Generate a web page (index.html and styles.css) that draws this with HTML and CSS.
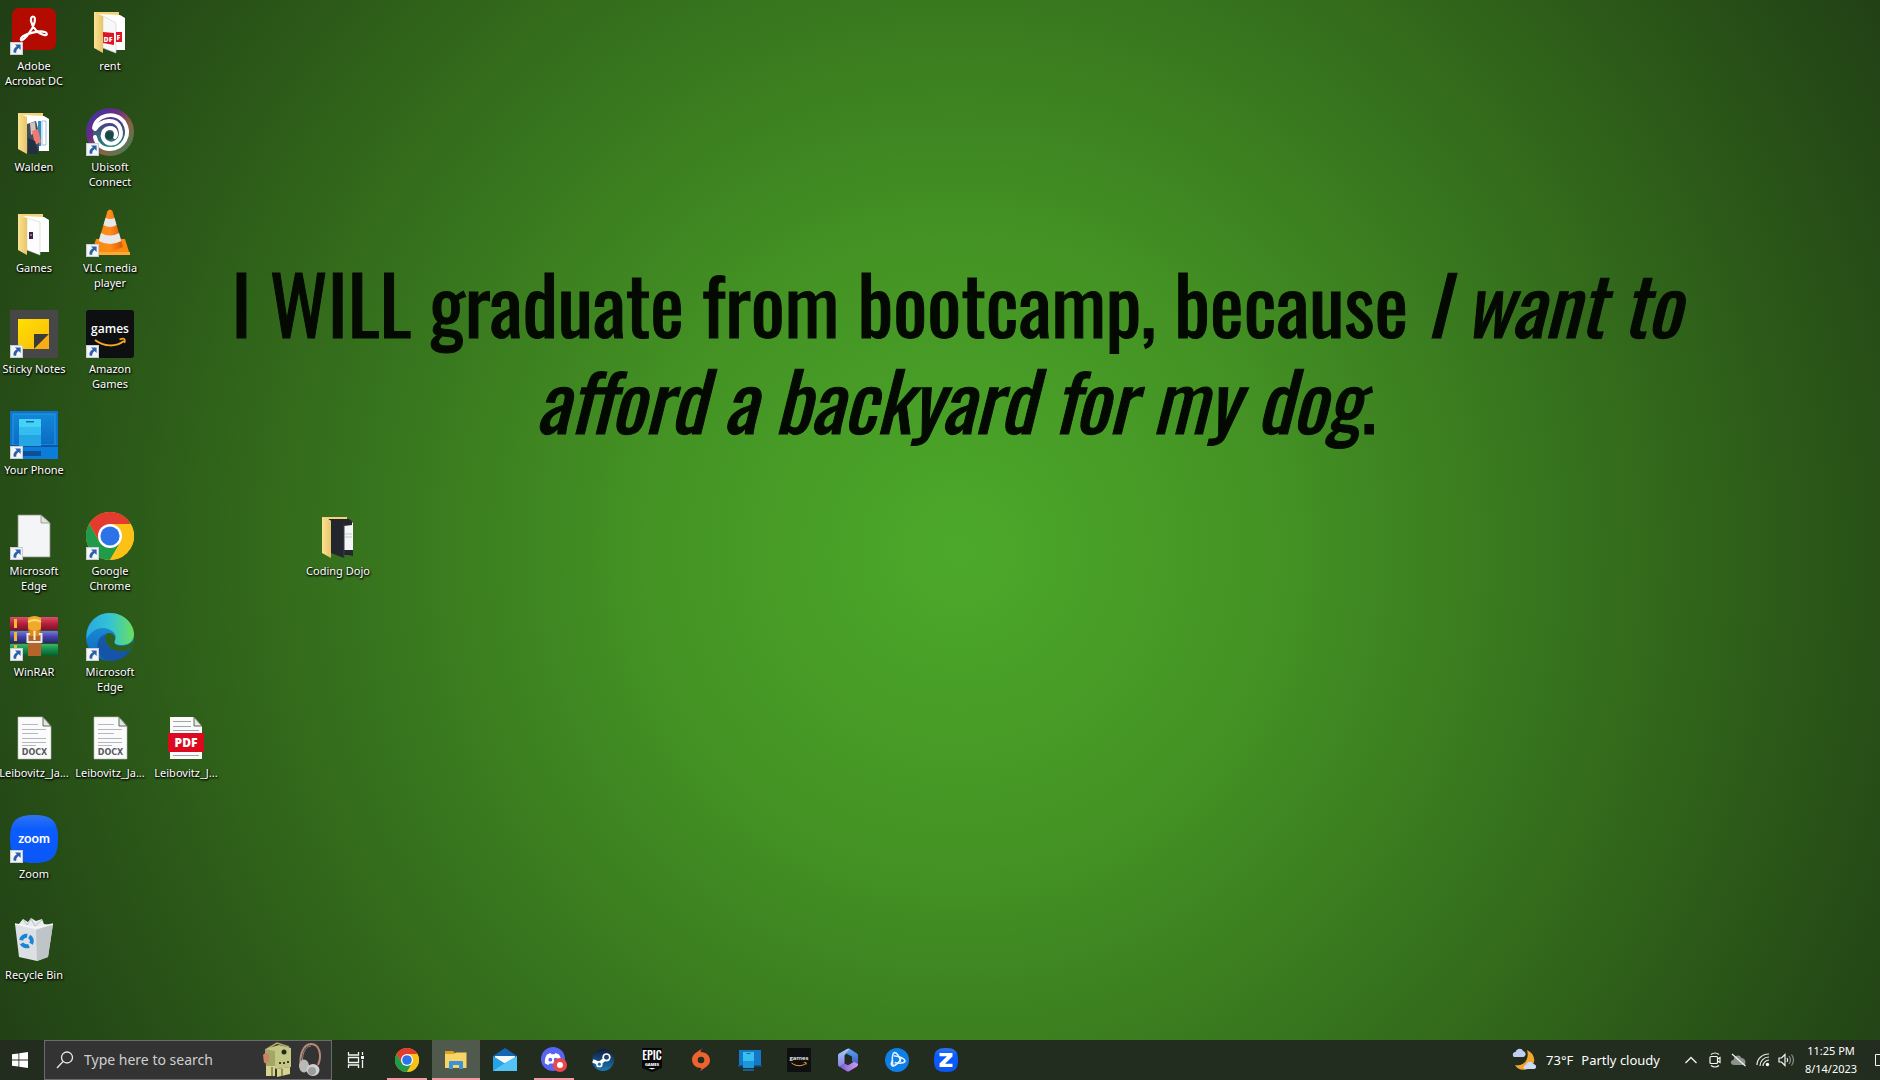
FILE: index.html
```html
<!DOCTYPE html>
<html lang="en">
<head>
<meta charset="utf-8">
<title>Desktop</title>
<link rel="stylesheet" href="styles.css">
</head>
<body>
<svg class="sprite" aria-hidden="true">
  <defs>
    <linearGradient id="g-flap" x1="0" x2="1"><stop offset="0" stop-color="#fbe293"/><stop offset="1" stop-color="#e8c566"/></linearGradient>
    <linearGradient id="g-rainbow" x1="0" y1="0" x2="1" y2="1"><stop offset="0" stop-color="#2f3aa8"/><stop offset=".35" stop-color="#6a2a86"/><stop offset=".62" stop-color="#8a6044"/><stop offset="1" stop-color="#2f8a5a"/></linearGradient>
    <linearGradient id="g-ubi" x1="0" y1="0" x2="0" y2="1"><stop offset="0" stop-color="#5a2a88"/><stop offset="1" stop-color="#1f8a78"/></linearGradient>
    <linearGradient id="g-cone" x1="0" x2="1"><stop offset="0" stop-color="#f98a12"/><stop offset=".5" stop-color="#ff8c1a"/><stop offset="1" stop-color="#d85a00"/></linearGradient>
    <linearGradient id="g-note" x1="0" y1="0" x2="1" y2="1"><stop offset="0" stop-color="#ffe000"/><stop offset="1" stop-color="#fbb90c"/></linearGradient>
    <linearGradient id="g-phone" x1="0" y1="0" x2="0" y2="1"><stop offset="0" stop-color="#1287d8"/><stop offset="1" stop-color="#0a6cc4"/></linearGradient>
    <linearGradient id="g-edge-top" x1="0" x2="1"><stop offset="0" stop-color="#2aa9e0"/><stop offset=".5" stop-color="#35c3d4"/><stop offset="1" stop-color="#6be05a"/></linearGradient>
    <linearGradient id="g-edge-left" x1="0" y1="0" x2="0" y2="1"><stop offset="0" stop-color="#1f9be0"/><stop offset="1" stop-color="#0c63b8"/></linearGradient>
    <linearGradient id="g-zoom" x1="0" y1="0" x2="0" y2="1"><stop offset="0" stop-color="#2f74ef"/><stop offset=".3" stop-color="#0b5cff"/><stop offset="1" stop-color="#0b56f5"/></linearGradient>
    <linearGradient id="g-red" x1="0" y1="0" x2="0" y2="1"><stop offset="0" stop-color="#d9506a"/><stop offset=".5" stop-color="#b8203c"/><stop offset="1" stop-color="#7c1228"/></linearGradient>
    <linearGradient id="g-blue" x1="0" y1="0" x2="0" y2="1"><stop offset="0" stop-color="#7a78d8"/><stop offset=".5" stop-color="#4340a8"/><stop offset="1" stop-color="#29266e"/></linearGradient>
    <linearGradient id="g-green" x1="0" y1="0" x2="0" y2="1"><stop offset="0" stop-color="#3cb56c"/><stop offset=".5" stop-color="#148a44"/><stop offset="1" stop-color="#0a5a2a"/></linearGradient>
    <linearGradient id="g-steam" x1="0" y1="0" x2="0" y2="1"><stop offset="0" stop-color="#101b3a"/><stop offset="1" stop-color="#1b7ab8"/></linearGradient>
    <linearGradient id="g-365a" x1="0" y1="0" x2="1" y2="0"><stop offset="0" stop-color="#7a5fd8"/><stop offset="1" stop-color="#d49af0"/></linearGradient>
    <linearGradient id="g-365b" x1="0" y1="0" x2="0" y2="1"><stop offset="0" stop-color="#58a6ee"/><stop offset="1" stop-color="#3f56c8"/></linearGradient>
    <linearGradient id="g-365c" x1="0" y1="0" x2="0" y2="1"><stop offset="0" stop-color="#9fd0f8"/><stop offset="1" stop-color="#8a7ee6"/></linearGradient>

    <symbol id="shortcut" viewBox="0 0 12 12">
      <rect x=".5" y=".5" width="11" height="11" fill="#f4f6f8" stroke="#c9ced4"/>
      <path d="M4.600 2.200H9.800V7.400L8 5.600C6.400 6.800 5.600 8 5.800 10H3.400C2.600 7.400 4 5.200 6.300 3.900Z" fill="#2b5fa8"/>
    </symbol>
    <symbol id="folder" viewBox="0 0 48 48">
      <path d="M8 5H33V40H10Z" fill="#f3d27c"/>
      <path d="M12 7 34 8 39 11V43H29L17 38Z" fill="#fff"/>
    </symbol>
    <symbol id="flap" viewBox="0 0 48 48">
      <path d="M8 5 17 9V46L8 41Z" fill="url(#g-flap)"/>
    </symbol>
    <symbol id="chrome" viewBox="0 0 48 48">
      <circle cx="24" cy="24" r="24" fill="#fbc116"/>
      <path d="M3.200 12A24 24 0 0 1 44.800 12H24L13.600 30Z" fill="#e33b2e"/>
      <path d="M3.200 12A24 24 0 0 0 24 48L34.400 30 24 34 13.600 30Z" fill="#219a49"/>
      <path d="M44.800 12A24 24 0 0 1 24 48L34.400 30 36 20 24 12Z" fill="#fbc116"/>
      <circle cx="24" cy="24" r="12" fill="#fff"/><circle cx="24" cy="24" r="9.600" fill="#2d73e8"/>
    </symbol>
    <symbol id="docx" viewBox="0 0 48 48">
      <path d="M8 3H33L41 12V45H8Z" fill="#fbfbfb" stroke="#b9beb6" stroke-width=".6"/>
      <path d="M33 3V12H41Z" fill="#e4e6e2" stroke="#5d6b58"/>
      <path d="M12 10.500H28M12 15.500H36M12 19.500H28M12 24.500H36M12 28.500H36M12 31.500H26" stroke="#b4b7bd"/>
      <text x="24.500" y="41" text-anchor="middle" class="art-docx" font-size="8" fill="#565b62">DOCX</text>
    </symbol>
    <symbol id="amazon" viewBox="0 0 48 48">
      <rect width="48" height="48" rx="3" fill="#0e0f10"/>
      <text x="24" y="23" text-anchor="middle" class="art-semi" font-size="12" fill="#fff">games</text>
      <path d="M9 30C18 37 30 37 38 31" fill="none" stroke="#f5a623" stroke-width="2"/>
      <path d="M33.500 29.500C37 28 40 28 38.500 33" fill="none" stroke="#f5a623" stroke-width="1.600"/>
    </symbol>
  </defs>
</svg>

<main class="screen">
  <p class="wallpaper">I WILL graduate from bootcamp, because <em>I want to<br>afford a backyard for my dog</em>.</p>

  <div class="desktop">
    <button class="item r1 c1"><span class="icon">
      <svg viewBox="0 0 48 48"><rect x="2" y="1" width="44" height="42" rx="7" fill="#b30b00"/><path d="M23 9.500C27 9.500 24.500 20 18 27.500 13 34 10 34.500 11 31.500 12.500 28 22 25 30 24.300 38 24 38.500 29 34 28 28 27 22 20 21 14 20.700 11 21.500 9.500 23 9.500Z" fill="none" stroke="#fff" stroke-width="2.200"/></svg>
      <svg class="arrow"><use href="#shortcut"/></svg></span><span class="label">Adobe Acrobat DC</span></button>
    <button class="item r1 c2"><span class="icon">
      <svg viewBox="0 0 48 48"><use href="#folder"/><path d="M17 9 30 16V46L17 41Z" fill="#f8f8f8" stroke="#c9ccd2" stroke-width=".6"/><path d="M17 25 28 26V38L17 36ZM30 25H36V35H30Z" fill="#dc1424"/><text x="17.500" y="34.500" class="art-bold" font-size="7" fill="#fff">DF</text><text x="30.500" y="33" class="art-bold" font-size="7" fill="#fff">F</text><use href="#flap"/></svg>
      </span><span class="label">rent</span></button>

    <button class="item r2 c1"><span class="icon">
      <svg viewBox="0 0 48 48"><use href="#folder"/><path d="M28 13H31V38H28Z" fill="#2f8fc4"/><path d="M32 13H36V37H32Z" fill="none" stroke="#9fc3de"/><path d="M17 16 26 13 29 25V46L17 43Z" fill="#3b4c60"/><path d="M20 15 25 14 26 24 21 27Z" fill="#d8c4b4"/><path d="M22 23 28 21 31 34 25 37Z" fill="#ee7a70"/><path d="M18 30 25 33 29 46H18Z" fill="#23303f"/><use href="#flap"/></svg>
      </span><span class="label">Walden</span></button>
    <button class="item r2 c2"><span class="icon">
      <svg viewBox="0 0 48 48"><circle cx="24" cy="24" r="24" fill="url(#g-rainbow)"/><circle cx="24" cy="24" r="17" fill="url(#g-ubi)"/><path d="M8 20C10 7 29 2 38 14 46 27 37 41 24 41 15 41 10 35 9 29M9 21C16 11 30 10 34 20 38 32 27 39 20 34 14 29 17 20 24 20 30 20 31 26 29 29" fill="none" stroke="#fff" stroke-width="4" stroke-linecap="round"/><circle cx="23.500" cy="27.500" r="4" fill="#1d4744"/></svg>
      <svg class="arrow"><use href="#shortcut"/></svg></span><span class="label">Ubisoft Connect</span></button>

    <button class="item r3 c1"><span class="icon">
      <svg viewBox="0 0 48 48"><use href="#folder"/><path d="M17 9 30 13V46L17 41Z" fill="#fdfdfd" stroke="#d2d2d2" stroke-width=".6"/><rect x="19" y="23" width="4" height="7" fill="#2a2856"/><rect x="20" y="25" width="2" height="2" fill="#d2564e"/><use href="#flap"/></svg>
      </span><span class="label">Games</span></button>
    <button class="item r3 c2"><span class="icon">
      <svg viewBox="0 0 48 48"><path d="M10 30H39L44 46H5Z" fill="#f98a12"/><path d="M5 43H44V46H5Z" fill="#ffa930"/><path d="M21.500 2Q24 -1 26.500 2L37 38Q24 45 11 38Z" fill="url(#g-cone)"/><path d="M19.500 9Q24 11 28.500 9L30.500 16Q24 20 17.500 16ZM15 24Q24 29 33 24L35.300 32Q24 38 12.700 32Z" fill="#e6e8ec"/></svg>
      <svg class="arrow"><use href="#shortcut"/></svg></span><span class="label">VLC media player</span></button>

    <button class="item r4 c1"><span class="icon">
      <svg viewBox="0 0 48 48"><rect width="48" height="48" fill="#474747"/><path d="M8 9H39V24L24 39H8Z" fill="url(#g-note)"/><path d="M24 24H39L24 39Z" fill="#3a3a3a"/><path d="M39 24V39H24Z" fill="#f9ad14"/></svg>
      <svg class="arrow"><use href="#shortcut"/></svg></span><span class="label">Sticky Notes</span></button>
    <button class="item r4 c2"><span class="icon">
      <svg viewBox="0 0 48 48"><use href="#amazon"/></svg>
      <svg class="arrow"><use href="#shortcut"/></svg></span><span class="label">Amazon Games</span></button>

    <button class="item r5 c1"><span class="icon">
      <svg viewBox="0 0 48 48"><rect width="48" height="48" fill="#0c74cc"/><rect x="3" y="3" width="42" height="31" fill="url(#g-phone)" stroke="#2a98e2"/><rect y="34" width="48" height="2" fill="#0a56a4"/><rect y="36" width="48" height="12" fill="#0b7cd8"/><rect x="9" y="8" width="22" height="27" rx="1" fill="#33bdf0"/><path d="M9 9Q9 8 10 8H30Q31 8 31 9V16H9Z" fill="#46d2f6"/><rect x="9" y="24" width="22" height="11" fill="#25a5e4"/><rect x="16" y="10" width="8" height="1.500" fill="#1668a8"/><path d="M9 40H31V45H9Z" fill="#0a5098"/></svg>
      <svg class="arrow"><use href="#shortcut"/></svg></span><span class="label">Your Phone</span></button>

    <button class="item r6 c1"><span class="icon">
      <svg viewBox="0 0 48 48"><path d="M8 3H31L40 11V45H8Z" fill="#f3f5f7" stroke="#8a9186" stroke-width=".8"/><path d="M31 3V11H40Z" fill="#dfe3e0" stroke="#8a9186" stroke-width=".8"/></svg>
      <svg class="arrow"><use href="#shortcut"/></svg></span><span class="label">Microsoft Edge</span></button>
    <button class="item r6 c2"><span class="icon">
      <svg viewBox="0 0 48 48"><use href="#chrome"/></svg>
      <svg class="arrow"><use href="#shortcut"/></svg></span><span class="label">Google Chrome</span></button>
    <button class="item r6 c5"><span class="icon">
      <svg viewBox="0 0 48 48"><use href="#folder"/><path d="M14 7H35L38 9V14L30 15V40H39V44L30 42V46L17 41V9Z" fill="#24262e"/><path d="M30 14 38 13V38L30 39Z" fill="#f4f5f7"/><path d="M31 22H38M31 25H38" stroke="#c2c6cc"/><path d="M30 38H39V43H30Z" fill="#24262e"/><path d="M30 12V46" stroke="#3b3e48"/><use href="#flap"/></svg>
      </span><span class="label">Coding Dojo</span></button>

    <button class="item r7 c1"><span class="icon">
      <svg viewBox="0 0 48 48"><rect y="4" width="48" height="13" rx="1" fill="url(#g-red)"/><rect y="18" width="48" height="12" rx="1" fill="url(#g-blue)"/><rect y="31" width="48" height="12" rx="1" fill="url(#g-green)"/><path d="M4 6H7V15H4ZM4 19H7V28H4ZM4 32H7V41H4Z" fill="#f7b733"/><rect x="18" y="12" width="13" height="31" fill="#b5652a"/><path d="M18 5Q24.500 1 31 5V14Q31 18 24.500 18T18 14Z" fill="#f0a92a"/><path d="M18 9Q24.500 5 31 9" fill="none" stroke="#fbdc72" stroke-width="2"/><rect x="19" y="18" width="11" height="5" fill="#e08a20"/><path d="M20 21H17.500V29H31.500V21H29" fill="none" stroke="#e6e8ec" stroke-width="2"/><rect x="23.500" y="18" width="2" height="9" fill="#fff2c8"/></svg>
      <svg class="arrow"><use href="#shortcut"/></svg></span><span class="label">WinRAR</span></button>
    <button class="item r7 c2"><span class="icon">
      <svg viewBox="0 0 48 48"><circle cx="24" cy="24" r="24" fill="url(#g-edge-left)"/><path d="M1 18C5 5 14 0 24 0 38 0 48 11 48 21 48 29 42 32 36 32 30 32 27 30 29 27 31 24 29 18 22 16 13 13 5 18 .500 26Z" fill="url(#g-edge-top)"/><path d="M20 21C13 25 14 37 23 42 30 46 38 43 45 36 40 45 31 49 22 48 9 44 8 24 20 21Z" fill="#1554a6"/><path d="M20 21C25 18 30 22 29 27 27 30 29 33 36 33 41 33 45 30 47 28L48 32C47 35 46 36 45 35 41 39 36 39 32 38 22 37 17 28 20 21Z" fill="#2c601c"/><path d="M20 21C17 29 22 37 32 38 36 39 41 39 45 35 41 42 35 47 27 47 15 43 12 26 20 21Z" fill="#1554a6"/></svg>
      <svg class="arrow"><use href="#shortcut"/></svg></span><span class="label">Microsoft Edge</span></button>

    <button class="item r8 c1"><span class="icon"><svg viewBox="0 0 48 48"><use href="#docx"/></svg></span><span class="label">Leibovitz_Ja...</span></button>
    <button class="item r8 c2"><span class="icon"><svg viewBox="0 0 48 48"><use href="#docx"/></svg></span><span class="label">Leibovitz_Ja...</span></button>
    <button class="item r8 c3"><span class="icon">
      <svg viewBox="0 0 48 48"><path d="M8 3H32L40 12V45H8Z" fill="#fbfbfb"/><path d="M32 3V12H40Z" fill="#e4e6e2" stroke="#5d6b58"/><path d="M11 7.500H29M11 12.500H29M11 16.500H37M11 41.500H37" stroke="#9fa3aa"/><rect x="6" y="19" width="36" height="19" fill="#dc0a1e"/><text x="24" y="33" text-anchor="middle" class="art-bold" font-size="12" fill="#fff">PDF</text></svg>
      </span><span class="label">Leibovitz_J...</span></button>

    <button class="item r9 c1"><span class="icon">
      <svg viewBox="0 0 48 48"><path d="M24 0C42 0 48 6 48 24S42 48 24 48 0 42 0 24 6 0 24 0Z" fill="url(#g-zoom)"/><text x="24" y="28" text-anchor="middle" class="art-zoom" font-size="13" fill="#fff">zoom</text></svg>
      <svg class="arrow"><use href="#shortcut"/></svg></span><span class="label">Zoom</span></button>
    <button class="item r10 c1"><span class="icon">
      <svg viewBox="0 0 48 48"><path d="M8 9 13 3 18 6 21 2 26 5 32 3 34 8 40 9 32 15H14Z" fill="#e9ebee"/><path d="M13 3 17 9 21 3 25 10 32 4" fill="none" stroke="#b9bdc2"/><path d="M5 8 26 14 43 8 38 41 27 45 9 41Z" fill="#dcdfe3"/><path d="M26 14 43 8 38 41 27 45Z" fill="#bfc4c9"/><path d="M5 8 26 12 43 8" fill="none" stroke="#f5f6f7" stroke-width="1.500"/><circle cx="16.500" cy="25" r="5.300" fill="none" stroke="#1a84d6" stroke-width="4" stroke-dasharray="8.200 2.900" transform="rotate(-60 16.500 25)"/></svg>
      </span><span class="label">Recycle Bin</span></button>
  </div>
</main>

<footer class="taskbar">
  <button class="task start" aria-label="Start"><svg width="16" height="16" viewBox="0 0 16 16" fill="#fff"><path d="M0 2.300 6.500 1.400V7.600H0ZM7.300 1.300 16 0V7.600H7.300ZM0 8.400H6.500V14.600L0 13.700ZM7.300 8.400H16V16L7.300 14.700Z"/></svg></button>
  <label class="search">
    <svg width="18" height="18" viewBox="0 0 18 18" fill="none" stroke="#e8e8e8" stroke-width="1.300"><circle cx="11" cy="6.500" r="5.500"/><path d="M7 10.500 1 17"/></svg>
    <input type="text" placeholder="Type here to search" aria-label="Type here to search">
    <svg width="60" height="36" viewBox="0 0 60 36">
      <path d="M4 7 14 1 26 5" fill="none" stroke="#b5ad62" stroke-width="1.500"/>
      <path d="M2 7 16 3 28 6V25L14 27 3 24Z" fill="#c3c684"/><path d="M2 7 12 9V27L3 24Z" fill="#a3a766"/>
      <path d="M0 13Q3 9 6 13V20L1 21Z" fill="#c98465"/>
      <circle cx="21" cy="10" r="2.500" fill="#252b1c"/>
      <path d="M16 20H18V22H16ZM20 20H22V22H20ZM24 19H26V21H24Z" fill="#3a3f28"/>
      <path d="M3 24H12V34H3ZM14 27 27 25V32L14 35Z" fill="#d7d391"/><path d="M8 25H10V34H8ZM18 27H20V34H18Z" fill="#8f9152"/>
      <path d="M38 24C36 14 40 2 48 2 57 2 59 14 55 23" fill="none" stroke="#b98b78" stroke-width="2"/><path d="M40 22C38 14 42 4 48 4" fill="none" stroke="#8f8a88"/>
      <ellipse cx="41" cy="24" rx="5" ry="6.500" fill="#b9bab8"/><ellipse cx="50" cy="28" rx="6.500" ry="6" fill="#cfd0cf"/><ellipse cx="49" cy="29" rx="4" ry="4" fill="#9b9d9d"/>
    </svg>
  </label>

  <nav class="tasks">
    <button class="task" aria-label="Task View"><svg width="18" height="18" viewBox="0 0 18 18" fill="none" stroke="#f2f2f2" stroke-width="1.300"><path d="M1.500 1V4H11.500V1M1.500 17V14H11.500V17M1.500 6.500H11.500V11.500H1.500ZM15.500 1V4M15.500 9V17"/><path d="M14 5H17V8H14Z" fill="#f2f2f2" stroke="none"/></svg></button>
    <button class="task running first" aria-label="Google Chrome"><svg width="24" height="24"><use href="#chrome"/></svg></button>
    <button class="task active" aria-label="File Explorer"><svg width="24" height="24" viewBox="0 0 24 24"><path d="M1 3H9L11 5H22V9H1Z" fill="#e0a11c"/><path d="M1 6H10L12 4.500H22.500V20H1Z" fill="#fbd467"/><path d="M5 21V14Q5 13 6 13H18Q19 13 19 14V21H15V17H9V21Z" fill="#3a94dc"/></svg></button>
    <button class="task" aria-label="Mail"><svg width="24" height="24" viewBox="0 0 24 24"><path d="M0 8 12 0 24 8V12H0Z" fill="#1266b4"/><path d="M2 8H22V15H2Z" fill="#f2f6fa"/><path d="M0 8 12 15.500 24 8V23H0Z" fill="#2aa3e6"/><path d="M0 23 12 15 24 8V23Z" fill="#53c4f4"/><path d="M3 8H21L12 14Z" fill="#f6f8fb"/></svg></button>
    <button class="task running" aria-label="Discord"><svg width="26" height="26" viewBox="0 0 26 26"><circle cx="12" cy="12" r="12" fill="#5865f2"/><path d="M6 7.500 9.500 6 10.500 7.200H13.500L14.500 6 18 7.500C20 10.500 20.500 13.500 20 16.500L16.500 18 15.500 16.500H8.500L7.500 18 4 16.500C3.500 13.500 4 10.500 6 7.500Z" fill="#fff"/><circle cx="9.300" cy="12.700" r="1.900" fill="#5865f2"/><circle cx="14.700" cy="12.700" r="1.900" fill="#5865f2"/><circle cx="19" cy="18" r="7" fill="#e8484c"/><circle cx="19" cy="18" r="3" fill="#fff"/></svg></button>
    <button class="task" aria-label="Steam"><svg width="22" height="22" viewBox="0 0 24 24"><circle cx="12" cy="12" r="12" fill="url(#g-steam)"/><path d="M1 13 8 16 14 11" fill="none" stroke="#fff" stroke-width="4"/><circle cx="8" cy="16.500" r="3.500" fill="#fff"/><circle cx="8" cy="16.500" r="1.700" fill="#2a6a9c"/><circle cx="15.800" cy="9" r="4.500" fill="#fff"/><circle cx="15.800" cy="9" r="2.700" fill="#22406a"/></svg></button>
    <button class="task" aria-label="Epic Games"><svg width="22" height="24" viewBox="0 0 22 24"><path d="M1 1Q1 0 2 0H20Q21 0 21 1V20L11 24 1 20Z" fill="#060708"/><text x="11" y="12" text-anchor="middle" class="art-narrow" font-size="11" fill="#fff">EPIC</text><text x="11" y="17.500" text-anchor="middle" class="art-bold" font-size="4" fill="#fff">GAMES</text><path d="M7.500 20H14.500L11 21.500Z" fill="#fff"/></svg></button>
    <button class="task" aria-label="Origin"><svg width="20" height="24" viewBox="0 0 20 24"><path d="M12 0C10 1.500 9.500 2.700 9.700 4 15 4 19 7.500 19 12.500 19 18 13 20 8 24 10 22 10.500 21.300 10.300 20 5 20 1 16.500 1 11.500 1 6 7 3.500 12 0Z" fill="#ee6230"/><circle cx="10" cy="12" r="3.300" fill="#232d1f"/></svg></button>
    <button class="task" aria-label="Your Phone"><svg width="24" height="24" viewBox="0 0 24 24"><path d="M1 2H23V17H1Z" fill="#1379c6"/><path d="M0 17H24V18.500H0Z" fill="#0b559c"/><path d="M5 4H16V20H5Z" fill="#35c0f0"/><path d="M5 13H16V20H5Z" fill="#1e96da"/><path d="M8.500 5H12.500V6H8.500Z" fill="#1668a8"/><path d="M5 21H16V23H5Z" fill="#0f5e9e"/></svg></button>
    <button class="task" aria-label="Amazon Games"><svg width="24" height="24"><use href="#amazon"/></svg></button>
    <button class="task" aria-label="Microsoft 365"><svg width="22" height="24" viewBox="0 0 22 24"><path d="M13 1 20 5.500Q21 6.200 21 7.500V17L15 13.500V8.500L9 5.500Z" fill="url(#g-365b)"/><path d="M13 1 9 5.500 7.500 7.500V15.500L3 19 2 18.400Q1 17.800 1 16.500V7.500Q1 6.200 2 5.500L9.500 1.200Q11.500 0 13 1Z" fill="url(#g-365c)"/><path d="M3 19 7.500 15.500 11 17.300 17 13.800 21 16V16.500Q21 17.800 20 18.400L12.500 23Q11 24 9.500 23Z" fill="url(#g-365a)"/></svg></button>
    <button class="task" aria-label="Battle.net"><svg width="24" height="24" viewBox="0 0 24 24"><circle cx="12" cy="12" r="12" fill="#0e7fe6"/><g fill="none" stroke="#e6f4ff" stroke-width="1.500"><path d="M8.500 18.500C6.500 14 7 5.500 9.500 4.500 12 4.500 15 9 15.500 14"/><path d="M9 8C14 7.500 20 11 20 13 19.500 15 14 16 9.500 14.500"/><path d="M16.500 9C15.500 13.500 10 18.500 7.500 18 5 17 6.500 14 8 12"/></g></svg></button>
    <button class="task" aria-label="Zoom"><svg width="24" height="24" viewBox="0 0 24 24"><path d="M12 0C21 0 24 3 24 12S21 24 12 24 0 21 0 12 3 0 12 0Z" fill="url(#g-zoom)"/><path d="M5.500 5H18.500V8.500L11 15.800H18.500V19H5.500V15.500L13 8.200H5.500Z" fill="#fff"/></svg></button>
  </nav>

  <div class="tray">
    <button class="weather"><svg width="26" height="24" viewBox="0 0 26 24"><path d="M15 2C24 6 25 17 16 21 10 23 5 21 3 17 11 19 18 12 15 2Z" fill="#f3a52c"/><path d="M3 9C0 9 0 4 3.500 4 5 0 10 0 11 3 15 4 14 9 11 9Z" fill="#bcd0f2"/><path d="M13 21C11 21 11 17 14 17 15 13 20 13 21 16 25 16 25 21 22 21Z" fill="#cbdcf8"/></svg><span>73°F</span><span>Partly cloudy</span></button>
    <div class="status">
      <button aria-label="Show hidden icons"><svg width="14" height="14" viewBox="0 0 14 14" fill="none" stroke="#f4f4f4" stroke-width="1.300"><path d="M1.500 10 7 4.500 12.500 10"/></svg></button>
      <button aria-label="Meet Now"><svg width="14" height="16" viewBox="0 0 14 16" fill="none" stroke="#f4f4f4" stroke-width="1.200"><path d="M3 2.500Q7-.500 11 2.500M3 13.500Q7 16.500 11 13.500"/><rect x="2" y="4.500" width="7.500" height="7" rx="1"/><path d="M9.500 7 12 5.500V10.500L9.500 9"/></svg></button>
      <button aria-label="OneDrive"><svg width="17" height="14" viewBox="0 0 17 14"><path d="M4 12C0 12 0 7 3.500 7 4 2 10 1 11.500 5 16 5 17 12 13 12Z" fill="#8d918b"/><path d="M2 1 15.500 13" stroke="#f2f2f2" stroke-width="1.300"/></svg></button>
      <button aria-label="Network"><svg width="14" height="14" viewBox="0 0 14 14" fill="none" stroke="#e6e8e4" stroke-width="1.200"><path d="M1 12C1 6 6 1 13 1M4 13C4 8 8 4 13 4M7 13C7 10 10 7 13 7"/><circle cx="11.500" cy="11.500" r="1.700" fill="#fff" stroke="none"/></svg></button>
      <button aria-label="Volume"><svg width="17" height="14" viewBox="0 0 17 14" fill="none" stroke="#f4f4f4" stroke-width="1.200"><path d="M1 5H3.500L7 1.500V12.500L3.500 9H1Z"/><path d="M9 5Q10.500 7 9 9"/><path d="M11 3Q14 7 11 11M13.500 1.500Q17.500 7 13.500 12.500" stroke="#8a9086"/></svg></button>
    </div>
    <button class="clock"><time>11:25 PM</time><time>8/14/2023</time></button>
    <button class="notify" aria-label="Notifications"><svg width="16" height="16" viewBox="0 0 16 16" fill="none" stroke="#f4f4f4"><path d="M.500 2.500H15.500V13.500H.500Z"/></svg></button>
  </div>
</footer>
</body>
</html>
```
FILE: styles.css
```css
* { box-sizing: border-box; }

body {
  margin: 0;
  min-height: 100vh;
  display: flex;
  flex-direction: column;
  overflow: hidden;
  color: #fff;
  font-family: "Noto Sans", "Open Sans", sans-serif;
  font-size: 11px;
  background: radial-gradient(circle at 51% 51%, #4ca92a 0%, #449324 28%, #3a7b1f 48%, #30631a 68%, #274e17 85%, #213f15 99%);
}

button {
  margin: 0;
  padding: 0;
  border: 0;
  background: none;
  color: inherit;
  font: inherit;
}

svg { display: block; flex: none; }

.sprite { position: absolute; width: 0; height: 0; }

.screen {
  flex: 1;
  display: grid;
}

.wallpaper,
.desktop { grid-area: 1 / 1; }

.wallpaper {
  margin: 0;
  padding: 254px 0 0 32px;
  color: #040a02;
  font-family: "Oswald", "Roboto Condensed", "Liberation Sans Narrow", sans-serif;
  font-size: 80px;
  font-weight: 410;
  -webkit-text-stroke: 1px #040a02;
  line-height: 96px;
  text-align: center;
  white-space: nowrap;
}

.desktop {
  display: grid;
  grid-template-columns: repeat(5, 76px);
  grid-template-rows: repeat(10, 101px);
  margin-left: -4px;
}

.item {
  display: flex;
  flex-direction: column;
  align-items: center;
  gap: 3px;
  padding-top: 7px;
}

.icon { position: relative; width: 48px; height: 48px; }
.icon svg { width: 48px; height: 48px; }
.icon .arrow { position: absolute; left: 0; bottom: 0; width: 13px; height: 13px; }

.label {
  max-width: 72px;
  line-height: 15px;
  text-align: center;
  text-shadow: 1px 1px 2px #000, 0 1px 2px #000;
}

.r1 { grid-row: 1; } .r2 { grid-row: 2; } .r3 { grid-row: 3; } .r4 { grid-row: 4; } .r5 { grid-row: 5; }
.r6 { grid-row: 6; } .r7 { grid-row: 7; } .r8 { grid-row: 8; } .r9 { grid-row: 9; } .r10 { grid-row: 10; }
.c1 { grid-column: 1; } .c2 { grid-column: 2; } .c3 { grid-column: 3; } .c5 { grid-column: 5; }

.art-bold { font-family: "Open Sans", sans-serif; font-weight: 800; }
.art-docx { font-family: "DejaVu Sans", sans-serif; font-weight: 700; }
.art-semi { font-family: "Open Sans", sans-serif; font-weight: 600; }
.art-zoom { font-family: "Lato", sans-serif; font-weight: 700; }
.art-narrow { font-family: "Oswald", "Roboto Condensed", sans-serif; font-weight: 500; }

.taskbar {
  display: flex;
  height: 40px;
  background: #222c1f;
}

.task {
  position: relative;
  display: grid;
  place-items: center;
  width: 48px;
  height: 40px;
}

.start { width: 44px; padding-right: 4px; }

.search {
  display: flex;
  align-items: center;
  gap: 10px;
  width: 288px;
  padding: 0 8px 0 11px;
  border: 1px solid #6b6b6b;
  background: #333;
}

.search input {
  flex: 1;
  min-width: 0;
  padding: 0;
  border: 0;
  outline: 0;
  background: none;
  color: #fff;
  font: 14px/20px "Noto Sans", "Open Sans", sans-serif;
}

.search input::placeholder { color: #cfcfcf; opacity: 1; }

.tasks { display: flex; gap: 1px; }

.first { margin-left: 2px; }

.running::after,
.active::after {
  content: "";
  position: absolute;
  left: 4px;
  right: 4px;
  bottom: 0;
  height: 2px;
  background: #f29aa4;
}

.active { background: #4f594c; }
.active::after { left: 0; right: 0; }

.tray { display: flex; align-items: center; margin-left: auto; }

.weather {
  display: flex;
  align-items: center;
  gap: 8px;
  margin-right: 19px;
  font-size: 13px;
}

.status { display: flex; align-items: center; gap: 1px; margin-right: 2px; }
.status button { display: grid; place-items: center; width: 23px; height: 40px; }

.clock {
  display: flex;
  flex-direction: column;
  align-items: center;
  width: 62px;
  line-height: 18px;
}

.notify { width: 5px; margin-left: 13px; overflow: hidden; }
```
